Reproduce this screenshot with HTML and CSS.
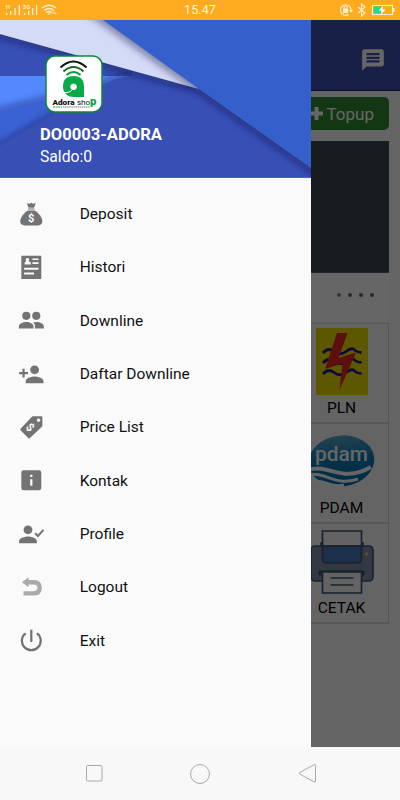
FILE: index.html
```html
<!DOCTYPE html>
<html lang="id">

<head>
    <meta charset="utf-8">
    <title>Adora Shop</title>
    <link rel="stylesheet" href="styles.css">
</head>

<body>
    <div class="statusbar">
        <svg class="signals" width="60" height="20" viewBox="0 0 60 20">
            <g fill="#fff0cf">
                <path d="M6 13h1.4v2H6zM10 11h1.4v4H10zM14.4 8h1.4v7h-1.4zM18.6 5H20v10h-1.4zM24 13h1.4v2H24zM28 11h1.4v4H28zM32 8h1.4v7H32zM36 5h1.2v10H36z" />
                <path d="M47.5 14.5l1.5-2 1.5 2zM52 13.2h2v-1.5l-2.5 2.2h2zM54.5 10.8v4l2.8-1.6h-1.5z" />
                <text x="6" y="9" font-size="5.5" font-weight="700">H</text>
                <text x="23" y="9" font-size="5.5" font-weight="700">3G</text>
            </g>
            <g fill="none" stroke="#fff0cf" stroke-width="1.5">
                <path d="M42 8q7-5.500 14 0M44.200 10.500q4.800-3.800 9.600 0M46.300 12.700q2.700-2.200 5.400 0" />
            </g>
        </svg>
        <span class="clock">15.47</span>
        <svg class="power" width="62" height="20" viewBox="0 0 62 20">
            <g fill="none" stroke="#fff0cf" stroke-width="1.100">
                <path d="M10.500 14.500a5.300 5.300 0 1 1 2.500-4.200" />
                <path d="M6 9V7.500a1.500 1.500 0 0 1 3 0V9" />
                <path d="M20 7l7 6-3.500 3V4L27 7l-7 6" />
                <rect x="34.500" y="5.500" width="20" height="9" />
            </g>
            <path fill="#fff0cf" d="M5 8.500h5V13H5zM11 10h4l-2 3zM55 8h1.500v4H55z" />
            <path fill="#15e08b" d="M35.500 6.500H43v7h-7.500z" />
            <path fill="#fff" d="M45 6l-4.500 4.500h3L43 14l4.500-4.500h-3z" />
        </svg>
    </div>

    <div class="screen">
        <div class="app">
            <div class="appbar">
                <svg width="26" height="26" viewBox="0 0 24 24" fill="#fff">
                    <path fill-rule="evenodd" d="M20 2H4c-1.100 0-2 .9-2 2v18l4-4h14c1.100 0 2-.9 2-2V4c0-1.100-.9-2-2-2zM6 5.500v2h12v-2zM6 9v2h12V9zM6 12.300v2h12v-2z" />
                </svg>
            </div>
            <div class="content">
                <div class="topup">
                    <svg width="13" height="13" viewBox="0 0 13 13" fill="#fff">
                        <path d="M4.500 0h4v4.500H13v4H8.500V13h-4V8.500H0v-4h4.500z" />
                    </svg>
                    <span>Topup</span>
                </div>
                <div class="slider"></div>
                <div class="dots">
                    <span class="dot active"></span>
                    <span class="dot"></span>
                    <span class="dot"></span>
                    <span class="dot"></span>
                </div>
                <div class="grid">
                    <div class="cell">
                        <svg width="92" height="75" viewBox="0 0 92 75">
                            <path fill="#e8d900" d="M20 4h52v67H20z" />
                            <g fill="none" stroke="#1c1c94" stroke-width="2.800">
                                <path d="M27 29q5-6 11-1.500t12 0 8-2 7.500 3M27 39q5-6 11-1.500t12 0 8-2 7.500 3M27 50q5-6 11-1.500t12 0 8-2 7.500 3" />
                            </g>
                            <path fill="#e52620" d="M41 9h10.500l-9 25L60 28.500 43.500 66l3-26.500L29 45z" />
                        </svg>
                        <span>PLN</span>
                    </div>
                    <div class="cell">
                        <svg width="92" height="75" viewBox="0 0 92 75">
                            <defs>
                                <linearGradient id="water" x1="0" y1="0" x2="0" y2="1">
                                    <stop offset="0" stop-color="#5aa6c8" />
                                    <stop offset=".5" stop-color="#087eb8" />
                                    <stop offset="1" stop-color="#006da8" />
                                </linearGradient>
                            </defs>
                            <ellipse cx="45.500" cy="37" rx="33" ry="25.500" fill="url(#water)" transform="rotate(-7 45 38)" />
                            <g fill="none" stroke="#fff">
                                <path stroke-width="4" d="M12 46c22-7 33 14 63-3" />
                                <path stroke-width="3" d="M12 51c18-4 26 12 50 4M14 57c14-2 22 8 34 4" />
                            </g>
                            <text class="pdam" x="45.500" y="37" text-anchor="middle" textLength="53" lengthAdjust="spacingAndGlyphs">pdam</text>
                        </svg>
                        <span>PDAM</span>
                    </div>
                    <div class="cell">
                        <svg width="92" height="75" viewBox="0 0 92 75">
                            <g stroke="#40566f" stroke-width="1.700">
                                <path fill="#40566f" d="M25 19h42v5H25z" />
                                <rect x="15" y="22" width="62" height="35" rx="4" fill="#8090a8" />
                                <path fill="#f8f8f8" d="M26.500 7h39v15h-39z" />
                                <path fill="#4678bd" d="M26.500 22h39v13q0 4-4 4h-31q-4 0-4-4z" />
                                <rect x="23" y="47" width="45" height="4" rx="2" fill="#40566f" />
                                <path fill="#f8f8f8" d="M26.500 48h39v21h-39z" />
                                <path d="M34.500 54h23M34.500 61h23" />
                            </g>
                            <circle cx="70.500" cy="30" r="1.700" fill="#d8c878" />
                        </svg>
                        <span>CETAK</span>
                    </div>
                </div>
            </div>
        </div>

        <div class="scrim"></div>

        <div class="drawer">
            <div class="drawer-header">
                <svg class="backdrop" width="311" height="158" viewBox="0 0 311 158">
                    <defs>
                        <filter id="shade" x="-10%" y="-20%" width="120%" height="150%">
                            <feDropShadow dx="-1" dy="3" stdDeviation="4" flood-color="#0b1645" flood-opacity=".55" />
                        </filter>
                        <filter id="shade-up" x="-10%" y="-20%" width="120%" height="150%">
                            <feDropShadow dx="-1" dy="-2" stdDeviation="4" flood-color="#0b1645" flood-opacity=".5" />
                        </filter>
                    </defs>
                    <path fill="#3750b6" d="M0 0h311v158H0z" />
                    <path fill="#5588ff" d="M0 56h135v40H0z" />
                    <path fill="#3b62d4" filter="url(#shade-up)" d="M-30 99L0 91l45-11 58-15v60L-30 150z" />
                    <path fill="#3750b6" filter="url(#shade-up)" d="M-30 144L0 126 57 93l46-28q14-9 30-9h50l160 85v60H-30z" />
                    <path fill="#3750b6" d="M132 40h60v30h-60z" />
                    <path fill="#d4dbf7" filter="url(#shade)" d="M-20-20H103L199 69 0 14l-20-5z" />
                    <path fill="#345fca" filter="url(#shade)" d="M75-20h270v192L199 69 103 0z" />
                    <path fill="#4663c4" d="M0 157h311v1H0z" />
                </svg>
                <svg class="logo" width="58" height="58" viewBox="0 0 58 58">
                    <rect x="1" y="1" width="56" height="56" rx="9" fill="#fff" stroke="#0b8a35" stroke-width="1.500" />
                    <g fill="none" stroke-width="2">
                        <path stroke="#111" d="M15.500 12.500q13-12 26 0" />
                        <path stroke="#17652c" d="M18.500 16.500q10-9 20 0" />
                        <path stroke="#0b9a3c" d="M21.500 20q7-6 14 0" />
                    </g>
                    <path fill="#07aa46" fill-rule="evenodd" d="M28.500 21Q39 21 39 32v10H29q-6 0-8-3-3-3-3-7.500 0-10.500 10.500-10.500zm0 7.500a3.300 3.300 0 1 0 .1 0z" />
                    <path fill="none" stroke="#fff" d="M18 37q6 2 10-3" />
                    <text class="brand" x="7.500" y="49.500" textLength="22" lengthAdjust="spacingAndGlyphs">Adora</text>
                    <text class="brand shop" x="32" y="49.500" textLength="19.500" lengthAdjust="spacingAndGlyphs">sho<tspan class="big">p</tspan></text>
                    <path stroke="#07aa46" stroke-dasharray="2 .6" d="M8 52h9" />
                    <path stroke="#777" stroke-dasharray="1.500 .6" d="M18 52h27" />
                </svg>
                <div class="name">DO0003-ADORA</div>
                <div class="saldo">Saldo:0</div>
            </div>

            <ul class="menu">
                <li>
                    <svg viewBox="0 0 24 24">
                        <path d="M8 2l2.500.5L12 1.500l1.500 1L16 2l-1.500 4h-5zM9 6.700h6v1H9z" />
                        <path d="M9 8.500h6c4 2.500 7 6.500 7 10 0 2-1.500 3.500-4 3.500H6c-2.500 0-4-1.500-4-3.500 0-3.500 3-7.500 7-10z" />
                        <text class="coin" x="12" y="19" text-anchor="middle">$</text>
                    </svg>
                    <span>Deposit</span>
                </li>
                <li>
                    <svg viewBox="0 0 24 24">
                        <path fill-rule="evenodd" d="M3 1.500h18v21H3zM13 4v1.500h5.500V4zM13 7.500V9h5.500V7.500zM5.500 12.500v1.800h13v-1.800zM5.500 16.700v1.800h9v-1.800zM8.500 3.500a1.700 1.700 0 0 0-1 3L6 7.500V9.500h5.500v-2L9.500 6.500a1.700 1.700 0 0 0-1-3z" />
                    </svg>
                    <span>Histori</span>
                </li>
                <li>
                    <svg viewBox="0 0 24 24">
                        <circle cx="7.500" cy="8" r="3.700" />
                        <circle cx="16.500" cy="8" r="3.700" />
                        <path d="M.8 19.500v-2c0-2.600 3.700-4 6.700-4s6.500 1.400 6.500 4v2zM15.300 19.500v-2.200c0-1.400-.7-2.500-1.800-3.300 1-.3 2.300-.5 3.300-.5 3 0 6.500 1.400 6.500 4v2z" />
                    </svg>
                    <span>Downline</span>
                </li>
                <li>
                    <svg viewBox="0 0 24 24">
                        <path d="M15 12c2.210 0 4-1.790 4-4s-1.790-4-4-4-4 1.790-4 4 1.790 4 4 4zm-9-2V7H4v3H1v2h3v3h2v-3h3v-2H6zm9 4c-2.670 0-8 1.340-8 4v2h16v-2c0-2.660-5.330-4-8-4z" />
                    </svg>
                    <span>Daftar Downline</span>
                </li>
                <li>
                    <svg viewBox="0 0 24 24">
                        <path fill-rule="evenodd" d="M13 2h8q1 0 1 1v8L11 21.500q-1 1-2 0L2.500 15q-1-1 0-2zM18.500 4a1.600 1.600 0 1 0 .1 0z" />
                        <text class="coin" x="11" y="15.500" text-anchor="middle" transform="rotate(45 11 12)">$</text>
                    </svg>
                    <span>Price List</span>
                </li>
                <li>
                    <svg viewBox="0 0 24 24">
                        <path fill-rule="evenodd" d="M5 3h14q2 0 2 2v14q0 2-2 2H5q-2 0-2-2V5q0-2 2-2zM11 7v2h2V7zM11 11v6h2v-6z" />
                    </svg>
                    <span>Kontak</span>
                </li>
                <li>
                    <svg viewBox="0 0 24 24">
                        <path d="M9 12c2.210 0 4-1.790 4-4s-1.790-4-4-4-4 1.790-4 4 1.790 4 4 4zm0 2c-2.670 0-8 1.340-8 4v2h16v-2c0-2.660-5.330-4-8-4z" />
                        <path class="line" d="M15.500 11l2.500 2.500L23 8" />
                    </svg>
                    <span>Profile</span>
                </li>
                <li>
                    <svg class="pale" viewBox="0 0 24 24">
                        <path d="M3.500 7.500L9.500 3v2.500H14.500q7 0 7 7 0 7-7 7H5v-4h9q3.500 0 3.500-3T14 9.500H9.500V12z" />
                    </svg>
                    <span>Logout</span>
                </li>
                <li>
                    <svg viewBox="0 0 24 24">
                        <path d="M13 2.500h-2v11h2zM17.800 4.900l-1.400 1.400A7.500 7.500 0 1 1 7.600 6.300L6.200 4.900A9.500 9.500 0 1 0 17.800 4.900z" />
                    </svg>
                    <span>Exit</span>
                </li>
            </ul>
        </div>
    </div>

    <div class="navbar">
        <svg width="20" height="20" viewBox="0 0 20 20">
            <rect x="3.500" y="1.500" width="15.500" height="15.500" rx="1" />
        </svg>
        <svg width="20" height="20" viewBox="0 0 20 20">
            <circle cx="10" cy="10" r="9.500" />
        </svg>
        <svg width="20" height="20" viewBox="0 0 20 20">
            <path d="M17 .8q1.500-1 1.500.5v16q0 1.500-1.500.5L3 10.300q-1.200-1 0-2z" />
        </svg>
    </div>
</body>

</html>
```

FILE: styles.css
```css
body {
    margin: 0;
    width: 400px;
    height: 800px;
    overflow: hidden;
    display: flex;
    flex-direction: column;
    font-family: Roboto, sans-serif;
}

svg {
    display: block;
    flex: none;
}

/* Android status bar */
.statusbar {
    display: flex;
    justify-content: space-between;
    align-items: center;
    height: 20px;
    background-color: #ffab20;
    color: #fff4dc;
}

.clock {
    padding-left: 2px;
    font-size: 12.5px;
    letter-spacing: 0.1px;
    line-height: 20px;
}

.screen {
    position: relative;
    height: 727px;
    overflow: hidden;
}

/* Page behind the drawer */
.app {
    height: 727px;
    background-color: #fafafa;
}

.appbar {
    box-sizing: border-box;
    display: flex;
    justify-content: flex-end;
    align-items: center;
    height: 71px;
    padding: 9px 14px 0 0;
    background-color: #3f51b5;
    border-bottom: 1px solid #102080;
}

.content {
    display: flex;
    flex-direction: column;
    align-items: flex-end;
    padding: 6px 11px 0;
}

.topup {
    box-sizing: border-box;
    display: flex;
    align-items: center;
    justify-content: flex-end;
    gap: 4px;
    width: 110px;
    height: 33px;
    padding-right: 15px;
    border-radius: 5px;
    background-color: #2e8b2e;
    color: #fff;
    font-size: 17px;
}

.slider {
    width: 378px;
    height: 131px;
    margin-top: 11px;
    background-color: #3a474f;
    border-bottom: 1px solid #506070;
}

.dots {
    box-sizing: border-box;
    display: flex;
    justify-content: flex-end;
    align-items: center;
    gap: 7px;
    width: 378px;
    height: 49px;
    padding: 0 15px 5px 0;
    background-color: #fff;
}

.dot {
    width: 4px;
    height: 4px;
    border-radius: 50%;
    background-color: #666;
}

.dot.active {
    background-color: #4caf50;
}

.grid {
    width: 94px;
    margin-top: 1px;
    border-top: 1px solid #d8d8d8;
}

.cell {
    box-sizing: border-box;
    height: 100px;
    border: 1px solid #d8d8d8;
    border-top: 0;
    border-bottom-width: 2px;
    text-align: center;
    font-size: 15.5px;
    line-height: 19px;
    color: #000;
}

.cell span {
    margin-right: 1px;
}

.pdam {
    font-family: Roboto, sans-serif;
    font-size: 21px;
    font-weight: 500;
    fill: #fff;
}

.scrim {
    position: absolute;
    inset: 0;
    background-color: rgba(0, 0, 0, 0.6);
}

/* Drawer */
.drawer {
    position: absolute;
    top: 0;
    left: 0;
    width: 311px;
    height: 727px;
    background-color: #fafafa;
}

.drawer-header {
    position: relative;
    box-sizing: border-box;
    height: 158px;
    padding: 35px 0 0 40px;
    overflow: hidden;
    color: #fff;
}

.backdrop {
    position: absolute;
    top: 0;
    left: 0;
}

.logo {
    position: relative;
    margin-left: 5px;
}

.brand {
    font-size: 7px;
    font-weight: 900;
    fill: #111;
}

.brand.shop {
    font-weight: 400;
}

.brand .big {
    font-size: 10px;
    font-weight: 900;
    fill: #07aa46;
}

.name {
    position: relative;
    margin-top: 12px;
    font-size: 16.6px;
    font-weight: 700;
    line-height: 20px;
}

.saldo {
    position: relative;
    margin-top: 2px;
    font-size: 15.7px;
    line-height: 20px;
}

.menu {
    list-style: none;
    margin: 0;
    padding: 9.3px 0 0;
}

.menu li {
    display: flex;
    align-items: center;
    gap: 35.5px;
    height: 53.33px;
    padding-left: 17.6px;
    font-size: 15.5px;
    color: #111;
}

.menu svg {
    width: 26.6px;
    height: 26.6px;
    fill: #737373;
}

.menu .pale {
    fill: #aaa;
}

.menu .line {
    fill: none;
    stroke: #737373;
    stroke-width: 1.8;
}

.menu .coin {
    font-size: 10px;
    font-weight: 700;
    fill: #fafafa;
}

/* Android navigation bar */
.navbar {
    display: flex;
    justify-content: center;
    align-items: center;
    gap: 87px;
    height: 53px;
    background-color: #f8f8f8;
}

.navbar svg {
    fill: none;
    stroke: #aaa;
    stroke-width: 1;
}
```
